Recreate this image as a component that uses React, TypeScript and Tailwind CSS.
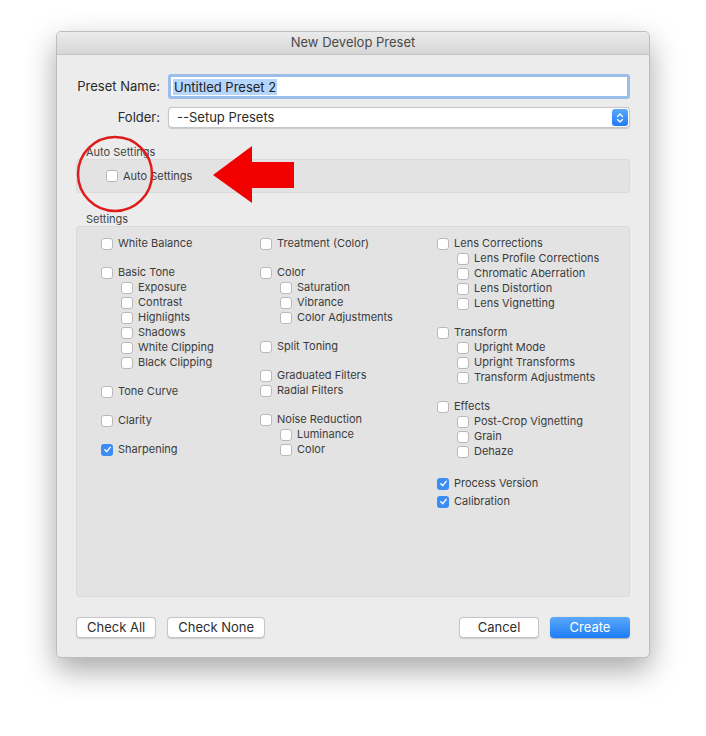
import React from "react";

type Item = { label: string; checked?: boolean; sub?: boolean; gap?: string };

const col1: Item[] = [
  { label: "White Balance" },
  { label: "Basic Tone", gap: "mt-[14px]" },
  { label: "Exposure", sub: true },
  { label: "Contrast", sub: true },
  { label: "Highlights", sub: true },
  { label: "Shadows", sub: true },
  { label: "White Clipping", sub: true },
  { label: "Black Clipping", sub: true },
  { label: "Tone Curve", gap: "mt-[14px]" },
  { label: "Clarity", gap: "mt-[14px]" },
  { label: "Sharpening", checked: true, gap: "mt-[14px]" },
];

const col2: Item[] = [
  { label: "Treatment (Color)" },
  { label: "Color", gap: "mt-[14px]" },
  { label: "Saturation", sub: true },
  { label: "Vibrance", sub: true },
  { label: "Color Adjustments", sub: true },
  { label: "Split Toning", gap: "mt-[14px]" },
  { label: "Graduated Filters", gap: "mt-[14px]" },
  { label: "Radial Filters" },
  { label: "Noise Reduction", gap: "mt-[14px]" },
  { label: "Luminance", sub: true },
  { label: "Color", sub: true },
];

const col3: Item[] = [
  { label: "Lens Corrections" },
  { label: "Lens Profile Corrections", sub: true },
  { label: "Chromatic Aberration", sub: true },
  { label: "Lens Distortion", sub: true },
  { label: "Lens Vignetting", sub: true },
  { label: "Transform", gap: "mt-[14px]" },
  { label: "Upright Mode", sub: true },
  { label: "Upright Transforms", sub: true },
  { label: "Transform Adjustments", sub: true },
  { label: "Effects", gap: "mt-[14px]" },
  { label: "Post-Crop Vignetting", sub: true },
  { label: "Grain", sub: true },
  { label: "Dehaze", sub: true },
  { label: "Process Version", checked: true, gap: "mt-[17px]" },
  { label: "Calibration", checked: true, gap: "mt-[3px]" },
];

function Box({ checked }: { checked?: boolean }) {
  if (checked) {
    return (
      <span className="flex h-[12px] w-[12px] shrink-0 items-center justify-center rounded-[3px] bg-[#3b8cf5]">
        <svg width="9" height="9" viewBox="0 0 10 10">
          <path d="M2 5.2 L4.2 7.4 L8 2.6" fill="none" stroke="#fff" strokeWidth="1.6" strokeLinecap="round" strokeLinejoin="round" />
        </svg>
      </span>
    );
  }
  return <span className="h-[12px] w-[12px] shrink-0 rounded-[3px] border border-[#b9b9b9] bg-white" />;
}

function Check({ item }: { item: Item }) {
  return (
    <div className={`flex h-[15px] items-center gap-[5px] ${item.sub ? "pl-[20px]" : ""} ${item.gap ?? ""}`}>
      <Box checked={item.checked} />
      <span className="whitespace-nowrap text-[11px] text-[#3c3c3c]">{item.label}</span>
    </div>
  );
}

function Button({ label, primary }: { label: string; primary?: boolean }) {
  return primary ? (
    <button className="h-[21px] w-[80px] rounded-[4px] bg-gradient-to-b from-[#5aa8fb] to-[#1c7cf5] text-[13px] text-white shadow-[0_0.5px_1px_rgba(0,0,0,0.25)]">
      {label}
    </button>
  ) : (
    <button className="h-[21px] rounded-[4px] border border-[#c6c6c6] bg-white px-[10px] text-[13px] text-[#2e2e2e] shadow-[0_0.5px_1px_rgba(0,0,0,0.15)]">
      {label}
    </button>
  );
}

export default function App() {
  return (
    <div className="relative h-[736px] w-[706px] overflow-hidden bg-white font-['Inter','Noto_Sans',sans-serif]">
      <div className="pl-[56px] pt-[31px]">
        <div className="w-[594px] overflow-hidden rounded-[5px] border border-[#bdbdbd] bg-[#ececec] shadow-[0_12px_30px_rgba(0,0,0,0.35)]">
          <div className="flex h-[23px] items-center justify-center border-b border-[#c4c4c4] bg-gradient-to-b from-[#ebebeb] to-[#d6d6d6] text-[13px] text-[#4a4a4a]">
            New Develop Preset
          </div>
          <div className="px-[19px] pb-[19px]">
            <div className="mt-[19px] flex h-[25px] items-center">
              <span className="w-[92px] shrink-0 whitespace-nowrap pr-[8px] text-right text-[13px] text-[#2a2a2a]">Preset Name:</span>
              <div className="flex-1 rounded-[3px] bg-[#9bbde9] p-[3px]">
                <div className="flex h-[19px] items-center bg-white px-[2px] text-[13px] text-[#222]">
                  <span className="bg-[#b5d5fc] px-[1px] leading-[16px]">Untitled Preset 2</span>
                </div>
              </div>
            </div>
            <div className="mt-[8px] flex h-[21px] items-center">
              <span className="w-[92px] shrink-0 whitespace-nowrap pr-[8px] text-right text-[13px] text-[#2a2a2a]">Folder:</span>
              <div className="flex h-[21px] flex-1 items-center justify-between rounded-[4px] border border-[#c6c6c6] bg-white pl-[8px] pr-[1px] shadow-[0_0.5px_1px_rgba(0,0,0,0.15)]">
                <span className="text-[13px] text-[#2a2a2a]">--Setup Presets</span>
                <span className="flex h-[17px] w-[16px] items-center justify-center rounded-[3px] bg-gradient-to-b from-[#5aa8fb] to-[#1c7cf5]">
                  <svg width="8" height="12" viewBox="0 0 8 12">
                    <path d="M1.5 4.5 L4 2 L6.5 4.5 M1.5 7.5 L4 10 L6.5 7.5" fill="none" stroke="#fff" strokeWidth="1.3" strokeLinecap="round" strokeLinejoin="round" />
                  </svg>
                </span>
              </div>
            </div>

            <div className="mt-[18px] pl-[10px] text-[11px] leading-[13px] text-[#444]">Auto Settings</div>
            <div className="flex h-[34px] items-center rounded-[3px] border border-[#dadada] bg-[#e3e3e3] pl-[29px]">
              <div className="flex items-center gap-[5px]">
                <Box />
                <span className="text-[11px] text-[#3c3c3c]">Auto Settings</span>
              </div>
            </div>

            <div className="mt-[20px] pl-[10px] text-[11px] leading-[13px] text-[#444]">Settings</div>
            <div className="flex h-[371px] rounded-[3px] border border-[#dadada] bg-[#e3e3e3] pl-[24px] pt-[9px]">
              <div className="w-[159px]">
                {col1.map((i) => (
                  <Check key={i.label} item={i} />
                ))}
              </div>
              <div className="w-[177px]">
                {col2.map((i, n) => (
                  <Check key={i.label + n} item={i} />
                ))}
              </div>
              <div className="flex-1">
                {col3.map((i) => (
                  <Check key={i.label} item={i} />
                ))}
              </div>
            </div>

            <div className="mt-[20px] flex items-center">
              <div className="flex gap-[11px]">
                <Button label="Check All" />
                <Button label="Check None" />
              </div>
              <div className="ml-auto flex gap-[11px]">
                <button className="h-[21px] w-[80px] rounded-[4px] border border-[#c6c6c6] bg-white text-[13px] text-[#2e2e2e] shadow-[0_0.5px_1px_rgba(0,0,0,0.15)]">
                  Cancel
                </button>
                <Button label="Create" primary />
              </div>
            </div>
          </div>
        </div>
      </div>

      <svg className="pointer-events-none absolute left-0 top-0" width="706" height="736">
        <circle cx="115" cy="174" r="37" fill="none" stroke="#e01b1b" strokeWidth="2.5" />
        <polygon points="213,175 252,146 252,162 294,162 294,188 252,188 252,203" fill="#f20000" />
      </svg>
    </div>
  );
}
